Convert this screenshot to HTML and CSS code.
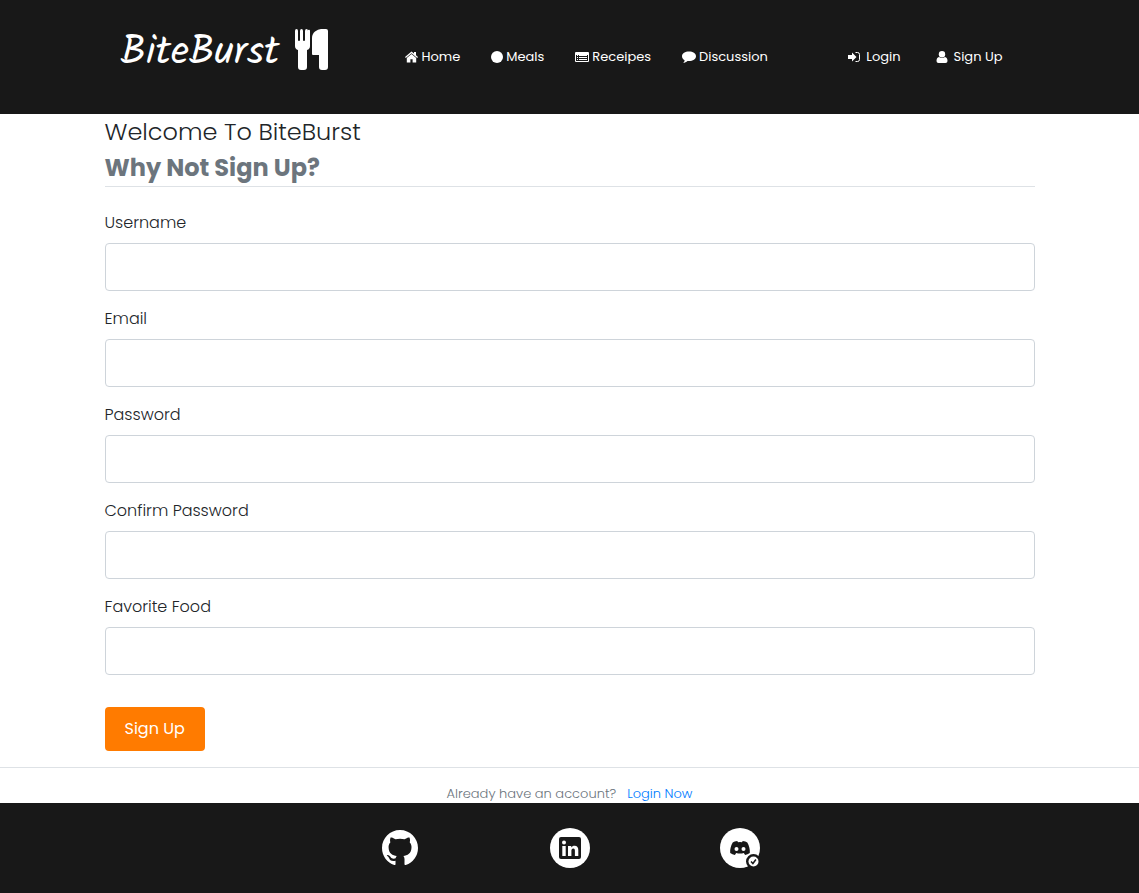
FILE: index.html
```html
<!DOCTYPE html>
<html lang="en">
<head>
<meta charset="utf-8">
<meta name="viewport" content="width=device-width, initial-scale=1">
<title>BiteBurst - Sign Up</title>
<link rel="stylesheet" href="styles.css">
</head>
<body>
<header class="site-header">
  <div class="container header-row">
    <a class="brand" href="#">
      <span class="brand-name">BiteBurst</span>
      <svg class="brand-icon" viewBox="0 0 33 41" aria-hidden="true">
        <path d="M0 2Q0 0 1.500 0T3 2v9q0 1 1 1t1-1V2q0-2 1.500-2T8 2v9q0 1 1 1t1-1V2q0-2 1.500-2T13 2v-1q2-1 2 1v15q0 3-3 4v17q0 3-3 3H6q-3 0-3-3V21q-3-1-3-4z"/>
        <path d="M31 0q2 0 2 2v36q0 3-3 3h-3q-3 0-3-3V26h-6q-1 0-1-1V9q0-4 3-6.500Q23 0 26 0z"/>
      </svg>
    </a>
    <nav class="nav" aria-label="Main">
      <a class="nav-link" href="#"><svg class="icon" viewBox="0 0 13 12" aria-hidden="true"><path d="M6.500.5 9 2.600V1h2v3.300l2 1.700-.8.9L6.500 2.200.800 6.900 0 6z"/><path d="m6.500 3 4.700 3.900v4.600H7.600V8.300H5.400v3.200H1.800V6.900z"/></svg>Home</a>
      <a class="nav-link" href="#"><svg class="icon" viewBox="0 0 12 12" aria-hidden="true"><circle cx="6" cy="6" r="6"/></svg>Meals</a>
      <a class="nav-link" href="#"><svg class="icon" viewBox="0 0 14 12" aria-hidden="true"><path fill-rule="evenodd" d="M1 1h12q1 0 1 1v8q0 1-1 1H1q-1 0-1-1V2q0-1 1-1zM1 4v6h12V4z"/><path d="M2 4h1v1H2zm2 0h8v1H4zM2 6h1v1H2zm2 0h8v1H4zM2 8h1v1H2zm2 0h8v1H4z"/></svg>Receipes</a>
      <a class="nav-link" href="#"><svg class="icon" viewBox="0 0 14 12" aria-hidden="true"><path d="M7 .5c3.900 0 7 2 7 4.700s-3.100 4.800-7 4.800l-1.500-.1C4.300 11 2.800 11.700 1.300 11.900c.7-.8 1.200-1.500 1.300-2.700C1 8.300 0 6.900 0 5.200 0 2.500 3.100.5 7 .5z"/></svg>Discussion</a>
    </nav>
    <nav class="nav nav-account" aria-label="Account">
      <a class="nav-link" href="#"><svg class="icon" viewBox="0 0 12 12" aria-hidden="true"><path d="M0 4h4V1.500L8.500 6 4 10.500V8H0z"/><path d="M7.500 1.500h2q2 0 2 2v5q0 2-2 2h-2" fill="none" stroke="#fff"/></svg>Login</a>
      <a class="nav-link" href="#"><svg class="icon" viewBox="0 0 12 12" aria-hidden="true"><circle cx="6" cy="3.300" r="3.200"/><path d="M3 6q3 2 6 0 2.500.500 2.500 4 0 2-2 2h-7q-2 0-2-2Q.500 6.500 3 6z"/></svg>Sign Up</a>
    </nav>
  </div>
</header>

<main class="main">
  <form class="container form" action="#">
    <h1 class="legend">Welcome To BiteBurst <strong class="legend-sub">Why Not Sign Up?</strong></h1>
    <div class="field"><label for="username">Username</label><input class="input" id="username" type="text"></div>
    <div class="field"><label for="email">Email</label><input class="input" id="email" type="email"></div>
    <div class="field"><label for="password">Password</label><input class="input" id="password" type="password"></div>
    <div class="field"><label for="confirm">Confirm Password</label><input class="input" id="confirm" type="password"></div>
    <div class="field"><label for="food">Favorite Food</label><input class="input" id="food" type="text"></div>
    <button class="submit" type="submit">Sign Up</button>
  </form>
  <p class="have-account"><span>Already have an account?</span><a class="login-link" href="#">Login Now</a></p>
</main>

<footer class="site-footer">
  <a class="social" href="#" aria-label="GitHub">
    <svg class="social-icon" viewBox="0 0 40 40"><g transform="translate(2 2) scale(2.250)"><path d="M8 0C3.580 0 0 3.580 0 8c0 3.540 2.290 6.530 5.470 7.590.4.070.55-.17.55-.38 0-.19-.01-.82-.01-1.490-2.010.37-2.530-.49-2.690-.94-.09-.23-.48-.94-.82-1.130-.28-.15-.68-.52-.01-.53.63-.01 1.080.58 1.230.82.72 1.210 1.870.87 2.330.66.070-.52.28-.87.51-1.070-1.780-.2-3.640-.89-3.640-3.950 0-.87.31-1.590.82-2.150-.08-.2-.36-1.020.08-2.120 0 0 .67-.21 2.200.82a7.600 7.600 0 0 1 4 0c1.530-1.040 2.200-.82 2.200-.82.44 1.100.16 1.920.08 2.120.51.56.82 1.270.82 2.150 0 3.070-1.870 3.750-3.650 3.950.29.25.54.73.54 1.480 0 1.070-.01 1.930-.01 2.200 0 .21.15.46.55.38A8 8 0 0 0 16 8c0-4.420-3.580-8-8-8z"/></g></svg>
  </a>
  <a class="social" href="#" aria-label="LinkedIn">
    <svg class="social-icon" viewBox="0 0 40 40"><circle cx="20" cy="20" r="20"/><rect class="ink" x="9" y="9" width="22" height="22" rx="2"/><circle cx="14" cy="14.500" r="2"/><path d="M12.300 18h3.400v10h-3.400zM18 18h3.200v1.400c.7-1 1.900-1.700 3.400-1.700 2.600 0 3.700 1.600 3.700 4.400V28h-3.400v-5.300c0-1.300-.3-2.300-1.600-2.300-1.400 0-1.900 1-1.900 2.300V28H18z"/></svg>
  </a>
  <a class="social" href="#" aria-label="Discord">
    <svg class="social-icon" viewBox="0 0 40 40"><circle cx="20" cy="20" r="20"/><path class="ink" d="M17.300 13c-1.900.2-3.500.8-4.600 1.500-1.900 3.300-2.800 7-2.500 10.400 1.500 1.100 3 1.800 4.700 2.100l1.300-2q3.800 1 7.600 0l1.300 2c1.700-.3 3.200-1 4.700-2.100.3-3.400-.6-7.100-2.500-10.400-1.100-.7-2.700-1.300-4.600-1.500l-.7 1.200q-2-.3-4 0z"/><circle cx="16.500" cy="21" r="2"/><circle cx="23.500" cy="21" r="2"/><circle class="ink" cx="33.500" cy="33.500" r="7.500"/><circle cx="33.500" cy="33.500" r="5"/><path d="m31 33.500 1.900 2 3-4" fill="none" stroke="#181818" stroke-width="1.500"/></svg>
  </a>
</footer>
</body>
</html>
```
FILE: styles.css
```css
* { box-sizing: border-box; }

body {
  margin: 0;
  min-height: 100vh;
  display: flex;
  flex-direction: column;
  background: #fff;
  color: #212529;
  font-family: Poppins, Inter, "Open Sans", sans-serif;
  font-size: 16px;
  font-weight: 300;
  line-height: 24px;
}

a { text-decoration: none; }

.container {
  width: 100%;
  max-width: 960px;
  margin: 0 auto;
  padding: 0 15px;
}

.site-header {
  background: #181818;
  padding: 18px 0 34px;
}

.header-row {
  display: flex;
  align-items: center;
  padding: 0 47px 0 31px;
}

.brand {
  display: flex;
  align-items: center;
  gap: 16px;
  margin-right: 77px;
  color: #fff;
}

.brand-name {
  padding-top: 8px;
  font-family: Kalam, "Open Sans", sans-serif;
  font-size: 40px;
  font-weight: 400;
  line-height: 54px;
}

.brand-icon { width: 33px; height: 41px; fill: #fff; }

.nav { display: flex; gap: 31px; padding-top: 15px; }

.nav-account { margin-left: auto; gap: 35px; }

.nav-link {
  display: flex;
  align-items: center;
  gap: 3px;
  color: #fff;
  font-size: 13px;
  font-weight: 400;
  line-height: 20px;
  white-space: nowrap;
}

.nav-account .nav-link { gap: 6px; }

.icon { height: 12px; fill: #fff; }

.main { flex: 1; }

.form { padding-bottom: 16px; }

.legend {
  margin: 0 0 24px;
  border-bottom: 1px solid #dee2e6;
  font-size: 24px;
  font-weight: 300;
  line-height: 36px;
}

.legend-sub { display: block; color: #6c757d; font-weight: 700; }

.field {
  display: flex;
  flex-direction: column;
  gap: 8px;
  margin-bottom: 16px;
}

.input {
  width: 100%;
  height: 48px;
  padding: 6px 12px;
  border: 1px solid #ced4da;
  border-radius: 4px;
  background: #fff;
  color: #495057;
  font: inherit;
}

.submit {
  display: block;
  margin-top: 32px;
  padding: 10px 20px;
  border: 0;
  border-radius: 4px;
  background: #ff7b00;
  color: #fff;
  font: inherit;
  font-weight: 400;
}

.have-account {
  display: flex;
  justify-content: center;
  gap: 11px;
  margin: 0;
  padding-top: 16px;
  border-top: 1px solid #dee2e6;
  color: #6c757d;
  font-size: 13px;
  line-height: 19px;
}

.login-link { color: #007bff; }

.site-footer {
  display: flex;
  justify-content: center;
  gap: 130px;
  padding: 25px 0;
  background: #181818;
}

.social { display: flex; }

.social-icon { width: 40px; height: 40px; fill: #fff; }

.ink { fill: #181818; }
```
